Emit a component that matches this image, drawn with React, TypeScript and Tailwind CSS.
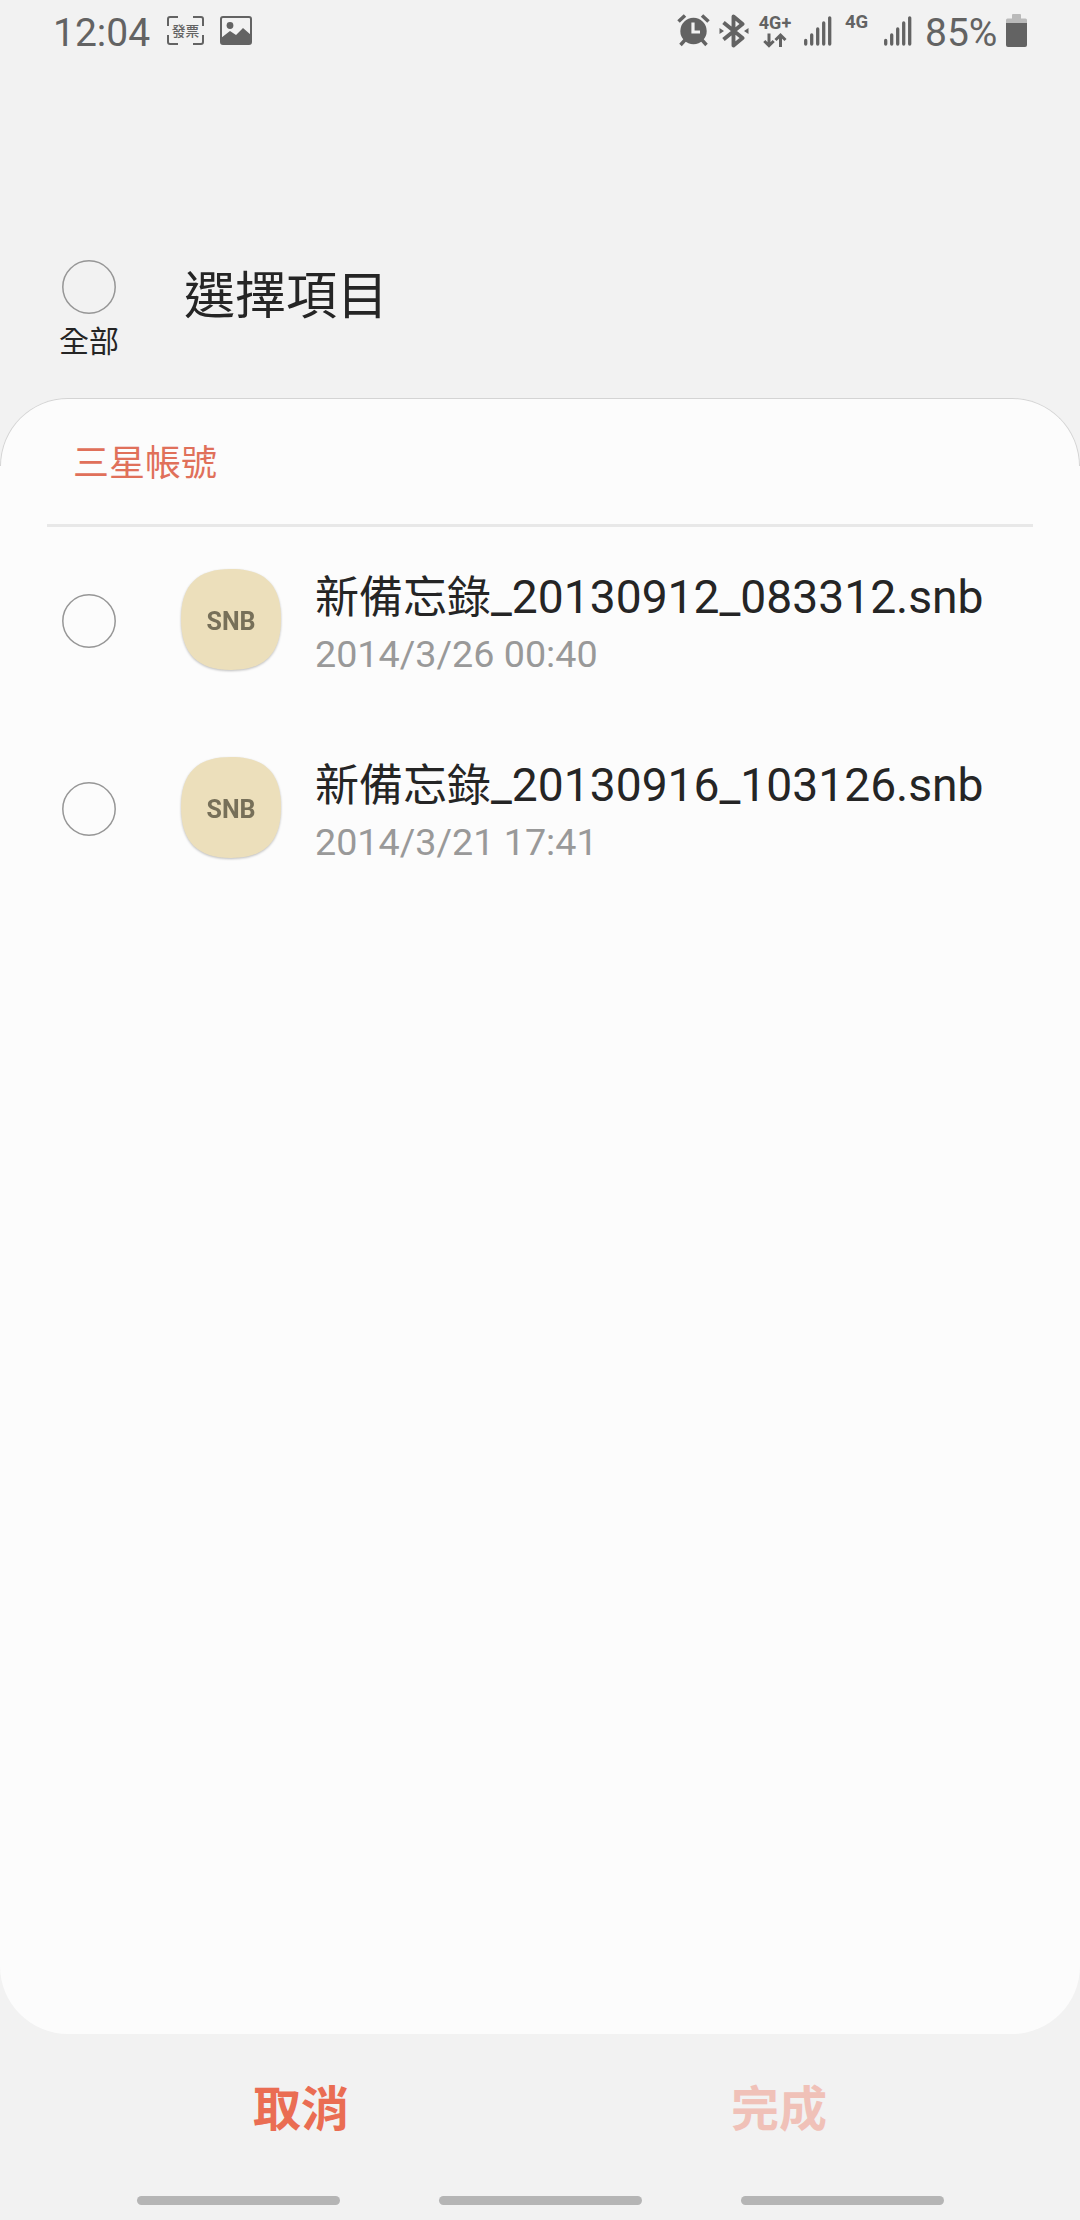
import React from 'react'

const files = [
  { prefix: '新備忘錄', name: '_20130912_083312.snb', date: '2014/3/26 00:40' },
  { prefix: '新備忘錄', name: '_20130916_103126.snb', date: '2014/3/21 17:41' },
]

function ScanIcon() {
  return (
    <svg width="37" height="29" viewBox="0 0 37 29" className="ml-[17px] shrink-0" fill="none">
      <path
        d="M1 10V3a2 2 0 0 1 2-2h8M26 1h8a2 2 0 0 1 2 2v7M36 19v7a2 2 0 0 1-2 2h-8M11 28H3a2 2 0 0 1-2-2v-7"
        stroke="#636363"
        strokeWidth="2"
      />
      <text
        x="18.5"
        y="19.5"
        fontSize="13.8"
        fontWeight="500"
        textAnchor="middle"
        fill="#636363"
        fontFamily="'Noto Sans CJK TC', sans-serif"
      >
        發票
      </text>
    </svg>
  )
}

function PictureIcon() {
  return (
    <svg width="32" height="29" viewBox="0 0 32 29" className="ml-4 shrink-0">
      <rect x="1" y="1" width="30" height="27" rx="2" fill="none" stroke="#636363" strokeWidth="2" />
      <circle cx="10" cy="9.5" r="3.4" fill="#636363" />
      <path d="M1 22l9-7 6 4 7-7 8 7v9H1z" fill="#636363" />
    </svg>
  )
}

function AlarmIcon() {
  return (
    <svg width="33" height="33" viewBox="0 0 33 33" className="shrink-0">
      <path d="M1.5 7.5l6.500-6M31.500 7.500l-6.500-6" stroke="#636363" strokeWidth="3.6" />
      <path d="M8 26l-4.500 5M25 26l4.500 5" stroke="#636363" strokeWidth="3.4" />
      <circle cx="16.5" cy="17" r="13.2" fill="#636363" />
      <path d="M16 8.500v9.500h7" fill="none" stroke="#f2f2f2" strokeWidth="3.2" />
    </svg>
  )
}

function BluetoothIcon() {
  return (
    <svg width="30" height="34" viewBox="0 0 30 34" className="ml-[9px] shrink-0">
      <path
        d="M4.500 8.500l19 15.500-9 7.500V2.500l9 7.500L4.500 25.500"
        fill="none"
        stroke="#636363"
        strokeWidth="3.9"
        strokeLinejoin="round"
      />
      <path d="M0.500 14l4.500 3-4.500 3zM29.500 14l-4.500 3 4.500 3z" fill="#636363" />
    </svg>
  )
}

function DataArrows() {
  return (
    <svg width="24" height="15" viewBox="0 0 24 15">
      <path
        d="M6 0.500v12M1.300 8L6 12.700 10.700 8M17.500 14V2.200M12.500 7l5-4.800L22.500 7"
        fill="none"
        stroke="#636363"
        strokeWidth="3"
      />
    </svg>
  )
}

function SignalIcon({ className }: { className: string }) {
  return (
    <svg width="28" height="30" viewBox="0 0 28 30" className={className}>
      <path
        d="M1.700 24.500v3.500M7.700 19v9M13.700 13v15M19.700 7v21M25.700 1.800V28"
        stroke="#636363"
        strokeWidth="3.3"
        strokeLinecap="round"
      />
    </svg>
  )
}

function BatteryIcon() {
  return (
    <svg width="21" height="33" viewBox="0 0 21 33" className="ml-[10px] shrink-0">
      <path
        d="M6 4.500V1a1 1 0 0 1 1-1h7a1 1 0 0 1 1 1v3.500h4.500A1.500 1.500 0 0 1 21 6v4H0V6a1.500 1.500 0 0 1 1.500-1.500z"
        fill="#bababa"
      />
      <path d="M0 9h21v22a2 2 0 0 1-2 2H2a2 2 0 0 1-2-2z" fill="#636363" />
    </svg>
  )
}

function StatusBar() {
  return (
    <div className="flex h-[61px] items-center px-[53px] text-[#636363]">
      <span className="w-[97px] whitespace-nowrap pt-[5px] text-[39px] leading-none">12:04</span>
      <ScanIcon />
      <PictureIcon />
      <div className="ml-auto flex items-center">
        <AlarmIcon />
        <BluetoothIcon />
        <div className="ml-[9px] flex w-[34px] flex-col items-center gap-[1px]">
          <span className="text-[18px] font-bold leading-[18px]">4G+</span>
          <DataArrows />
        </div>
        <SignalIcon className="ml-[12px] shrink-0" />
        <span className="mb-[18px] ml-[13px] w-[25px] text-[18.5px] font-bold leading-[18px]">4G</span>
        <SignalIcon className="ml-[14px] shrink-0" />
        <span className="ml-[13px] w-[71px] whitespace-nowrap pt-[5px] text-[39px] leading-none">85%</span>
        <BatteryIcon />
      </div>
    </div>
  )
}

function Radio() {
  return (
    <svg width="54" height="54" viewBox="0 0 54 54" className="shrink-0" fill="none">
      <circle cx="27" cy="27" r="26.2" stroke="#969696" strokeWidth="1.5" />
    </svg>
  )
}

function SnbIcon() {
  return (
    <svg
      width="102"
      height="106"
      viewBox="0 0 102 106"
      className="ml-16 shrink-0 drop-shadow-[0_1px_1px_rgba(0,0,0,0.25)]"
    >
      <path d="M51 1C84 1 101 16 101 51S84 102 51 102 1 86 1 51 18 1 51 1z" fill="#ecdfbb" />
      <text
        x="51"
        y="61.5"
        fontSize="26"
        fontWeight="700"
        textAnchor="middle"
        textLength="49"
        lengthAdjust="spacingAndGlyphs"
        fill="#777059"
        fontFamily="Roboto, sans-serif"
      >
        SNB
      </text>
    </svg>
  )
}

function FileRow({ prefix, name, date }: { prefix: string; name: string; date: string }) {
  return (
    <li className="flex h-[188px] items-center pl-[62px]">
      <Radio />
      <SnbIcon />
      <div className="ml-[33px] whitespace-nowrap pt-[8px]">
        <p className="flex items-baseline text-[46.2px] leading-[56px] text-[#252525]">
          <span className="text-[44px]">{prefix}</span>
          <span>{name}</span>
        </p>
        <p className="text-[37.7px] leading-[56px] text-[#999999]">{date}</p>
      </div>
    </li>
  )
}

function App() {
  return (
    <div className="flex h-[2220px] w-[1080px] flex-col overflow-hidden bg-[#f2f2f2] font-[Roboto,'Noto_Sans_CJK_TC',sans-serif]">
      <StatusBar />

      <header className="flex h-[337px] items-start pl-[59px] pt-[199px]">
        <div className="flex w-[60px] flex-col items-center">
          <Radio />
          <span className="mt-[7px] whitespace-nowrap text-[30px] leading-[42px] text-[#252525]">全部</span>
        </div>
        <h1 className="ml-[65px] pt-[2px] text-[51px] leading-[70px] text-[#252525]">選擇項目</h1>
      </header>

      <main className="relative h-[1636px] rounded-[68px] bg-[#fcfcfc]">
        {/* hairline that follows only the top curve of the sheet */}
        <span className="absolute inset-x-0 top-0 h-[68px] rounded-t-[68px] border border-b-0 border-[#d4d4d4]" />
        <div className="mx-[47px] h-[129px] border-b-[3px] border-[#e8e8e8] pl-[26px]">
          <h2 className="pt-[38px] text-[36px] leading-[56px] text-[#e0705a]">三星帳號</h2>
        </div>
        <ul>
          {files.map((file) => (
            <FileRow key={file.name} {...file} />
          ))}
        </ul>
      </main>

      <footer className="flex h-[162px] justify-center">
        <button type="button" className="h-[152px] w-[478px] text-[48px] font-bold text-[#ea6d53]">
          取消
        </button>
        <button type="button" disabled className="h-[152px] w-[478px] text-[48px] font-bold text-[#f0c1b8]">
          完成
        </button>
      </footer>

      <nav className="flex justify-center gap-[99px]">
        <span className="h-[9px] w-[203px] rounded-full bg-[#b5b5b5]" />
        <span className="h-[9px] w-[203px] rounded-full bg-[#b5b5b5]" />
        <span className="h-[9px] w-[203px] rounded-full bg-[#b5b5b5]" />
      </nav>
    </div>
  )
}

export default App
